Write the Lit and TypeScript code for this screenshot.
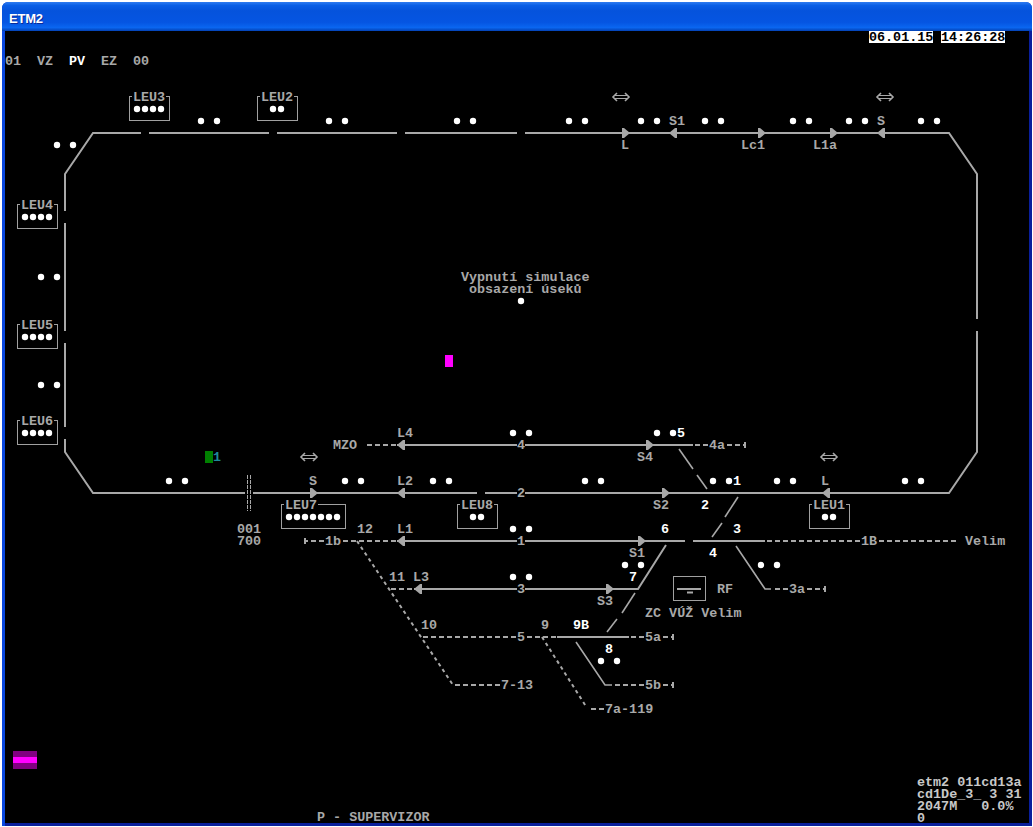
import { LitElement, css, html, svg, unsafeCSS } from "lit";
import { customElement } from "lit/decorators.js";

// All diagram data is in screenshot pixels; the svg viewBox starts at the canvas corner.
type Pt = [number, number];
type Label = [string, number, number, string?];

const GREY = "#a8a8a8";
const WHITE = "#ffffff";
const INFO = "#c8c8c8";

// solid track and branch segments
const SOLID: Pt[][] = [
  [[65, 211], [65, 174], [93, 133], [141, 133]],
  [[149, 133], [269, 133]],
  [[277, 133], [397, 133]],
  [[405, 133], [517, 133]],
  [[525, 133], [949, 133], [977, 174], [977, 319]],
  [[977, 331], [977, 452], [949, 493], [485, 493]],
  [[477, 493], [253, 493]],
  [[245, 493], [93, 493], [65, 452], [65, 439]],
  [[65, 427], [65, 343]],
  [[65, 331], [65, 223]],
  [[397, 445], [693, 445]],
  [[397, 541], [685, 541]],
  [[693, 541], [765, 541]],
  [[414, 589], [638, 589], [666, 545]],
  [[557, 637], [629, 637]],
];

const THIN: Pt[][] = [
  [[679, 449], [693, 469]],
  [[697, 475], [707, 489]],
  [[738, 497], [725, 517]],
  [[722, 523], [712, 537]],
  [[736, 546], [765, 589], [771, 589]],
  [[635, 593], [622, 613]],
  [[617, 619], [607, 632]],
  [[576, 642], [605, 685], [612, 685]],
];

// horizontal dashed runs: the source draws them as minus signs in 8px cells
const DASHED: Pt[][] = [
  [[367, 445], [397, 445]],
  [[695, 445], [709, 445]],
  [[727, 445], [744, 445]],
  [[306, 541], [325, 541]],
  [[343, 541], [397, 541]],
  [[767, 541], [860, 541]],
  [[879, 541], [958, 541]],
  [[390, 589], [414, 589]],
  [[772, 589], [789, 589]],
  [[807, 589], [824, 589]],
  [[423, 637], [516, 637]],
  [[527, 637], [557, 637]],
  [[631, 637], [645, 637]],
  [[663, 637], [672, 637]],
  [[612, 685], [645, 685]],
  [[663, 685], [672, 685]],
  [[455, 685], [501, 685]],
  [[590, 709], [606, 709]],
];

const DOTTED: Pt[][] = [
  [[357, 541], [453, 685]],
  [[542, 637], [587, 708]],
];

// [tip x, y, direction]
const SIGNALS: [number, number, 1 | -1][] = [
  [630, 133, 1], [669, 133, -1], [766, 133, 1], [838, 133, 1], [877, 133, -1],
  [318, 493, 1], [397, 493, -1], [670, 493, 1], [822, 493, -1],
  [397, 445, -1], [654, 445, 1],
  [397, 541, -1], [646, 541, 1],
  [414, 589, -1], [614, 589, 1],
];

const DOTS: Pt[] = [
  [57, 145], [73, 145], [201, 121], [217, 121], [329, 121], [345, 121], [457, 121], [473, 121],
  [569, 121], [585, 121], [641, 121], [657, 121], [705, 121], [721, 121], [793, 121], [809, 121],
  [849, 121], [865, 121], [921, 121], [937, 121],
  [41, 277], [57, 277], [41, 385], [57, 385], [521, 301],
  [513, 433], [529, 433], [657, 433], [673, 433],
  [169, 481], [185, 481], [345, 481], [361, 481], [433, 481], [449, 481], [585, 481], [601, 481],
  [713, 481], [729, 481], [777, 481], [793, 481], [905, 481], [921, 481],
  [513, 529], [529, 529], [625, 565], [641, 565], [761, 565], [777, 565],
  [513, 577], [529, 577], [601, 661], [617, 661],
];

// [name, x, y, w, lamps]
const LEUS: [string, number, number, number, number][] = [
  ["LEU3", 129, 96, 40, 4],
  ["LEU2", 257, 96, 40, 2],
  ["LEU4", 17, 204, 40, 4],
  ["LEU5", 17, 324, 40, 4],
  ["LEU6", 17, 420, 40, 4],
  ["LEU7", 281, 504, 64, 7],
  ["LEU8", 457, 504, 40, 2],
  ["LEU1", 809, 504, 40, 2],
];

const ARROWS: Pt[] = [[621, 97], [885, 97], [309, 457], [829, 457]];

const LABELS: Label[] = [
  ["01", 5, 61], ["VZ", 37, 61], ["PV", 69, 61, WHITE], ["EZ", 101, 61], ["00", 133, 61],
  ["L", 621, 145], ["S1", 669, 121], ["Lc1", 741, 145], ["L1a", 813, 145], ["S", 877, 121],
  ["Vypnutí simulace", 461, 277], ["obsazení úseků", 469, 289],
  ["MZO", 333, 445], ["L4", 397, 433], ["S4", 637, 457],
  ["S", 309, 481], ["L2", 397, 481], ["S2", 653, 505], ["L", 821, 481],
  ["001", 237, 529], ["700", 237, 541], ["12", 357, 529], ["L1", 397, 529], ["S1", 629, 553],
  ["11", 389, 577], ["L3", 413, 577], ["S3", 597, 601], ["RF", 717, 589],
  ["10", 421, 625], ["9", 541, 625], ["ZC VÚŽ Velim", 645, 613],
  ["Velim", 965, 541],
  ["5", 677, 433, WHITE], ["1", 733, 481, WHITE], ["2", 701, 505, WHITE], ["6", 661, 529, WHITE],
  ["3", 733, 529, WHITE], ["4", 709, 553, WHITE], ["7", 629, 577, WHITE], ["9B", 573, 625, WHITE],
  ["8", 605, 649, WHITE],
  ["1", 213, 457, "#1f8a9a"],
  ["P - SUPERVIZOR", 317, 817],
  ["etm2 011cd13a", 917, 782, INFO], ["cd1De_3_ 3 31", 917, 794, INFO],
  ["2047M   0.0%", 917, 806, INFO], ["0", 917, 818, INFO],
];

// labels that sit on a track and cut it with a black cell
const TRACK_LABELS: Label[] = [
  ["4", 517, 445], ["2", 517, 493], ["1", 517, 541], ["3", 517, 589], ["5", 517, 637],
  ["1b", 325, 541], ["1B", 861, 541], ["4a", 709, 445], ["3a", 789, 589],
  ["5a", 645, 637], ["5b", 645, 685], ["7-13", 501, 685], ["7a-119", 605, 709],
];

const STOPS: Pt[] = [[305, 541], [745, 445], [825, 589], [673, 637], [673, 685]];

const pts = (p: Pt[]) => p.map((q) => q.join(",")).join(" ");

@customElement("app-root")
export class AppRoot extends LitElement {
  static styles = css`
    :host {
      display: block;
      width: 1033px;
      height: 827px;
      background: #ffffff;
    }
    .window {
      box-sizing: border-box;
      width: 1030px;
      height: 824px;
      margin: 2px 0 0 2px;
      display: flex;
      flex-direction: column;
      border-radius: 6px 6px 0 0;
      overflow: hidden;
      background: #0a38c8;
    }
    .title {
      height: 29px;
      flex: none;
      box-sizing: border-box;
      display: flex;
      align-items: center;
      padding: 4px 0 0 7px;
      color: #ffffff;
      font: bold 13px "Liberation Sans", sans-serif;
      letter-spacing: -0.2px;
      text-shadow: 1px 1px 0 #0a2a9a;
      background: linear-gradient(
        180deg,
        #2f7cf0 0%,
        #0a5fe6 12%,
        #0553dc 30%,
        #0555e2 70%,
        #0a66f0 88%,
        #0341b4 100%
      );
    }
    .frame {
      flex: 1;
      min-height: 0;
      display: flex;
      padding: 0 3px 3px 3px;
      background: linear-gradient(90deg, #0a48e0 0 3px, #0a1f9c 3px);
    }
    svg {
      display: block;
      flex: 1;
      background: #000000;
    }
    text {
      font-family: "Liberation Mono", monospace;
      font-size: 13.4px;
      font-weight: bold;
      dominant-baseline: central;
      white-space: pre;
    }
    .track {
      fill: none;
      stroke: ${unsafeCSS(GREY)};
      stroke-width: 2;
    }
    .thin {
      stroke-width: 1.6;
    }
    .dash {
      stroke-dasharray: 5 3;
    }
    .dot {
      stroke-dasharray: 3.5 3.5;
    }
    .joint {
      stroke-width: 1;
      stroke-dasharray: 4 1;
    }
    .rail {
      stroke-width: 1;
    }
    .box {
      fill: none;
      stroke: #a0a0a0;
      stroke-width: 1;
    }
    .stamp {
      fill: #000000;
    }
    .lamp {
      fill: #ffffff;
    }
    .signal {
      fill: ${unsafeCSS(GREY)};
    }
    .date {
      fill: #ffffff;
    }
    .magenta {
      fill: #ff00ff;
    }
    .dim {
      fill: #800080;
    }
    .green {
      fill: #008000;
    }
  `;

  private line(p: Pt[], cls = "") {
    return svg`<polyline class="track ${cls}" points=${pts(p)}></polyline>`;
  }

  // keep the minus signs on the 8px character cells whatever the run's start is
  private dashes(p: Pt[]) {
    const offset = (((p[0][0] - 7) % 8) + 8) % 8;
    return svg`<polyline class="track dash" points=${pts(p)} stroke-dashoffset=${offset}></polyline>`;
  }

  private text([t, x, y, color]: Label) {
    return svg`<text x=${x} y=${y} fill=${color ?? GREY}>${t}</text>`;
  }

  private leu([name, x, y, w, lamps]: [string, number, number, number, number]) {
    const start = x + w / 2 - ((lamps - 1) * 8) / 2;
    return svg`
      <rect class="box" x=${x + 0.5} y=${y + 0.5} width=${w} height="24"></rect>
      <rect class="stamp" x=${x + 3} y=${y - 5} width=${name.length * 8 + 2} height="10"></rect>
      ${this.text([name, x + 4, y + 1])}
      ${Array.from({ length: lamps }, (_, i) =>
        svg`<circle class="lamp" cx=${start + i * 8} cy=${y + 13} r="3.2"></circle>`
      )}
    `;
  }

  private arrow([x, y]: Pt) {
    return svg`
      <path class="track thin" d="M${x - 4} ${y - 4} L${x - 8} ${y} L${x - 4} ${y + 4} M${x + 4} ${y - 4} L${x + 8} ${y} L${x + 4} ${y + 4}"></path>
      <path class="track rail" d="M${x - 6} ${y - 1.5} H${x + 6} M${x - 6} ${y + 1.5} H${x + 6}"></path>
    `;
  }

  // flat back and a taper to the tip, the track runs out of the point
  private signal([x, y, d]: [number, number, 1 | -1]) {
    return svg`<path class="signal" d="M${x - 8 * d} ${y - 5} H${x - 6 * d} L${x} ${y} L${x - 6 * d} ${y + 5} H${x - 8 * d} Z"></path>`;
  }

  render() {
    return html`
      <div class="window">
        <div class="title">ETM2</div>
        <div class="frame">
          <svg viewBox="5 31 1024 792" width="1024" height="792">
            ${SOLID.map((p) => this.line(p))}
            ${THIN.map((p) => this.line(p, "thin"))}
            ${DASHED.map((p) => this.dashes(p))}
            ${DOTTED.map((p) => this.line(p, "dot"))}

            <!-- isolating joint at km 001/700 -->
            <path class="track joint" d="M247.5 475V511M250.5 475V511"></path>

            ${SIGNALS.map((s) => this.signal(s))}
            ${STOPS.map(([x, y]) => svg`<path class="track" d="M${x} ${y - 3}V${y + 3}"></path>`)}
            ${TRACK_LABELS.map(([t, x, y]) =>
              svg`<rect class="stamp" x=${x} y=${y - 6} width=${t.length * 8} height="12"></rect>`
            )}
            ${TRACK_LABELS.map((l) => this.text(l))}
            ${DOTS.map(([x, y]) => svg`<circle class="lamp" cx=${x} cy=${y} r="3.2"></circle>`)}
            ${LEUS.map((l) => this.leu(l))}
            ${ARROWS.map((a) => this.arrow(a))}
            ${LABELS.map((l) => this.text(l))}

            <rect class="date" x="869" y="31" width="64" height="12"></rect>
            <rect class="date" x="941" y="31" width="64" height="12"></rect>
            ${this.text(["06.01.15", 869, 37, "#000"])}
            ${this.text(["14:26:28", 941, 37, "#000"])}

            <!-- RF box -->
            <rect class="box" x="673.5" y="576.5" width="32" height="24"></rect>
            <path class="track" d="M677 589H701M687 592.5H693"></path>

            <rect class="magenta" x="445" y="355" width="8" height="12"></rect>
            <rect class="green" x="205" y="451" width="8" height="12"></rect>
            <rect class="dim" x="13" y="751" width="24" height="18"></rect>
            <rect class="magenta" x="13" y="757" width="24" height="6"></rect>
          </svg>
        </div>
      </div>
    `;
  }
}
